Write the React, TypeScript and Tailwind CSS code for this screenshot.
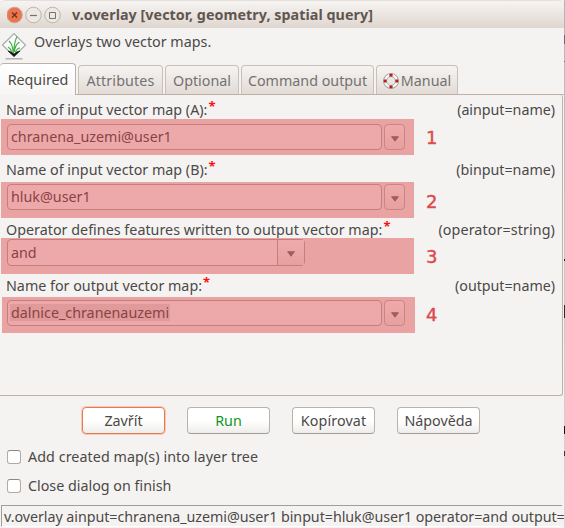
import type { ReactNode } from "react";

const Asterisk = () => (
  <span className="ml-px mt-[-2px] font-['Open_Sans',sans-serif] text-[13px] font-bold leading-[16px] tracking-normal text-[#ff1010]">*</span>
);

const Arrow = () => (
  <svg width="8" height="6" viewBox="0 0 8 6">
    <path d="M0.6 0.7h6.8L4 5.2z" fill="#a95e62" stroke="#9b5054" strokeWidth="0.8" />
  </svg>
);

type FieldProps = {
  label: string;
  labelClass: string;
  hint: string;
  hintClass?: string;
  box: string;
  digit: string;
  digitClass: string;
  children: ReactNode;
};

function Field({ label, labelClass, hint, hintClass = "", box, digit, digitClass, children }: FieldProps) {
  return (
    <div className="flex flex-col">
      <div className={`-ml-px flex items-start justify-between pl-[6px] pr-[7px] leading-[20px] ${labelClass}`}>
        <div className="flex">
          <span>{label}</span>
          <Asterisk />
        </div>
        <span className={hintClass}>{hint}</span>
      </div>
      <div className="flex h-[36px]">
        <div className={`flex h-[36px] w-[413px] shrink-0 items-start bg-[#e9a3a3] ${box}`}>{children}</div>
        <span className={`font-['DejaVu_Sans',sans-serif] text-[18px] leading-[18px] tracking-normal text-[#dc4a4c] [-webkit-text-stroke:0.4px_#dc4a4c] ${digitClass}`}>{digit}</span>
      </div>
    </div>
  );
}

function Combo({ value, valueClass = "" }: { value: string; valueClass?: string }) {
  return (
    <>
      <div className="flex h-[26px] w-[375px] items-start rounded-[4px] border border-[#c87c7c] bg-[#eda9a9] pl-[2px] pt-[3px] text-[#8a4347]">
        <span className={`px-px leading-[17px] ${valueClass}`}>{value}</span>
      </div>
      <div className="ml-[2px] flex h-[26px] w-[21px] items-center justify-center rounded-[4px] border border-[#cc8484] bg-linear-to-b from-[#eeaaaa] to-[#e7a0a0] pt-[3px]">
        <Arrow />
      </div>
    </>
  );
}

function Tab({ children, className }: { children: ReactNode; className: string }) {
  return (
    <div className={`flex h-[29px] items-center justify-center rounded-t-[4px] border border-b-0 border-[#c9c0b9] bg-linear-to-b from-[#f6f4f2] to-[#e2dbd6] pt-px text-[#747170] ${className}`}>
      {children}
    </div>
  );
}

function Button({ children, className = "border-[#bcb2aa] border-b-[#a69b93]" }: { children: ReactNode; className?: string }) {
  return (
    <div className={`flex h-[27px] w-[83px] items-center justify-center rounded-[4px] border bg-linear-to-b from-white from-50% to-[#efedeb] ${className}`}>
      {children}
    </div>
  );
}

function Check({ children, className = "" }: { children: ReactNode; className?: string }) {
  return (
    <div className={`flex h-[29px] items-center ${className}`}>
      <span className="mr-[7px] h-[14px] w-[14px] rounded-[3px] border border-[#b5aaa2] border-t-[#92877f] bg-white" />
      {children}
    </div>
  );
}

export default function App() {
  return (
    <div className="flex h-[528px] w-[565px] overflow-hidden whitespace-nowrap bg-[#f5f3f2] font-['Noto_Sans',sans-serif] text-[14.3px] tracking-[0px] text-[#4b4947]">
      <div className="flex w-[564px] shrink-0 flex-col">
        <header className="flex h-[28px] items-center rounded-t-[6px] border-t border-[#e4dfda] bg-linear-to-b from-[#f6f4f2] to-[#dfd6d0] pl-[7px]">
          <svg width="56" height="18" viewBox="0 0 56 18" fill="none">
            <circle cx="7.5" cy="9" r="7.8" fill="#ef744b" stroke="#c4aa9d" />
            <path d="m5 6.5 5 5m0-5-5 5" stroke="#5c3326" strokeWidth="1.2" />
            <circle cx="26.5" cy="9" r="7.8" fill="#ece8e4" stroke="#bfb4ac" />
            <path d="M23 9.5h7" stroke="#79716b" strokeWidth="1.2" />
            <circle cx="45.5" cy="9" r="7.8" fill="#ece8e4" stroke="#bfb4ac" />
            <path d="M42.5 6.5h6v6h-6z" stroke="#79716b" />
          </svg>
          <span className="ml-[9px] text-[14.3px] font-bold tracking-[0.05px] text-[#60564f]">v.overlay [vector, geometry, spatial query]</span>
        </header>

        <div className="flex h-[35px] items-start pl-px pt-[4px]">
          <svg width="26" height="28" viewBox="0 0 26 28" fill="none">
            <path d="M1.5 13 13 1.500 24.500 13 13 24.500z" fill="#fafafa" stroke="#a9adaa" strokeWidth="1.2" />
            <path d="m7 19 6 5.500 6-5.500-3.500 1-2.500 2-2.500-2z" fill="#101710" stroke="#101710" strokeWidth="0.6" />
            <path d="M12.500 21C13 15 13.500 9 16 4.500M12 20C12 15 10 11 8 9M13.500 20c0-4 2-8 5-10M10.500 20c-.5-2-1.500-4-3.500-5M14.500 20c1-2 2.500-4 4.500-4" stroke="#3fae44" strokeWidth="1.100" />
            <path d="M4.500 26.800h17" stroke="#a9aca8" strokeWidth="1.300" />
          </svg>
          <span className="ml-[7px] mt-[-1px] leading-[22px]">Overlays two vector maps.</span>
        </div>

        <div className="flex h-[32px] items-end gap-[2px] border-b border-[#bdb1a8]">
          <div className="mb-[-1px] flex h-[32px] w-[76px] items-center justify-center rounded-t-[4px] border border-b-0 border-l-0 border-[#bdb1a8] bg-linear-to-b from-white to-[#f7f6f5] pl-px">Required</div>
          <Tab className="w-[85px] tracking-[0.1px]">Attributes</Tab>
          <Tab className="w-[74px]">Optional</Tab>
          <Tab className="w-[133px]">Command output</Tab>
          <Tab className="w-[82px]">
            <svg className="mr-[2px]" width="16" height="16" viewBox="0 0 16 16" fill="none">
              <circle cx="8" cy="8" r="5.900" stroke="#8b8784" strokeWidth="3.800" />
              <circle cx="8" cy="8" r="5.900" stroke="#f8f8f8" strokeWidth="2.500" />
              <path d="M8 .8v2.800M8 12.400v2.800M.8 8h2.800M12.400 8h2.800" stroke="#b3201e" strokeWidth="3.200" />
            </svg>
            Manual
          </Tab>
        </div>

        <main className="mr-px flex h-[301px] flex-col rounded-br-[3px] rounded-tr-[3px] border-b border-r border-[#bfb2a8] pl-px pt-[5px]">
          <Field label="Name of input vector map (A):" labelClass="h-[19px]" hint="(ainput=name)" hintClass="tracking-[-0.04px]" box="pl-[6px] pt-[5px]" digit="1" digitClass="ml-[12px] mt-[10px]">
            <Combo value="chranena_uzemi@user1" />
          </Field>
          <Field label="Name of input vector map (B):" labelClass="h-[27px] pt-[5px]" hint="(binput=name)" hintClass="tracking-[-0.04px]" box="pl-[6px] pt-[2px]" digit="2" digitClass="ml-[12px] mt-[11px]">
            <Combo value="hluk@user1" />
          </Field>
          <Field label="Operator defines features written to output vector map:" labelClass="h-[20px] pt-[2px] tracking-[0.02px]" hint="(operator=string)" hintClass="tracking-[0.1px]" box="pl-[6px] pt-[1px]" digit="3" digitClass="ml-[12px] mt-[10px]">
            <div className="flex h-[27px] w-[298px] rounded-[4px] border border-[#c87c7c] bg-[#eda9a9] text-[#8a4347]">
              <span className="w-[270px] border-r border-[#c87c7c] pl-[3px] leading-[25px]">and</span>
              <span className="flex flex-1 items-center justify-center bg-linear-to-b from-[#eeaaaa] to-[#e7a0a0] pt-[2px]"><Arrow /></span>
            </div>
          </Field>
          <Field label="Name for output vector map:" labelClass="h-[23px] pt-[2px]" hint="(output=name)" hintClass="tracking-[-0.04px]" box="ml-px pl-[5px] pt-[3px]" digit="4" digitClass="ml-[11px] mt-[9px]">
            <Combo value="dalnice_chranenauzemi" valueClass="bg-[#df9a99]" />
          </Field>
        </main>

        <div className="mt-[11px] flex h-[27px] gap-[22px] pl-[82px]">
          <Button className="border-[#e87a50] ring-1 ring-[#f3c9b7]">Zavřít</Button>
          <Button className="border-[#bcb2aa] border-b-[#a69b93] text-[#0f961f]">Run</Button>
          <Button className="border-[#bcb2aa] border-b-[#a69b93] tracking-[0.1px]">Kopírovat</Button>
          <Button>Nápověda</Button>
        </div>

        <div className="mt-[8px] flex flex-col pl-[7px]">
          <Check className="tracking-[0.07px]">Add created map(s) into layer tree</Check>
          <Check>Close dialog on finish</Check>
        </div>

        <footer className="ml-px mt-[5px] h-[22px] w-[561px] border-b border-l border-t border-[#a19d99] border-b-white pl-[2px] leading-[22px] tracking-[-0.05px]">
          v.overlay ainput=chranena_uzemi@user1 binput=hluk@user1 operator=and output=
        </footer>
      </div>
      <div className="flex w-px flex-col bg-linear-to-b from-[#b6b3bd] to-[#d8d6d4]">
        <span className="mt-[35px] h-[9px] bg-[#6d6b69]" />
        <span className="mt-[17px] h-px bg-[#777472]" />
        <span className="mt-[197px] h-[2px] bg-[#1c1a1a]" />
        <span className="mt-[44px] h-[13px] bg-[#2b2a29]" />
        <span className="mt-[108px] h-[8px] bg-[#111111]" />
        <span className="mt-[17px] h-[5px] bg-[#3a3a3a]" />
      </div>
    </div>
  );
}
